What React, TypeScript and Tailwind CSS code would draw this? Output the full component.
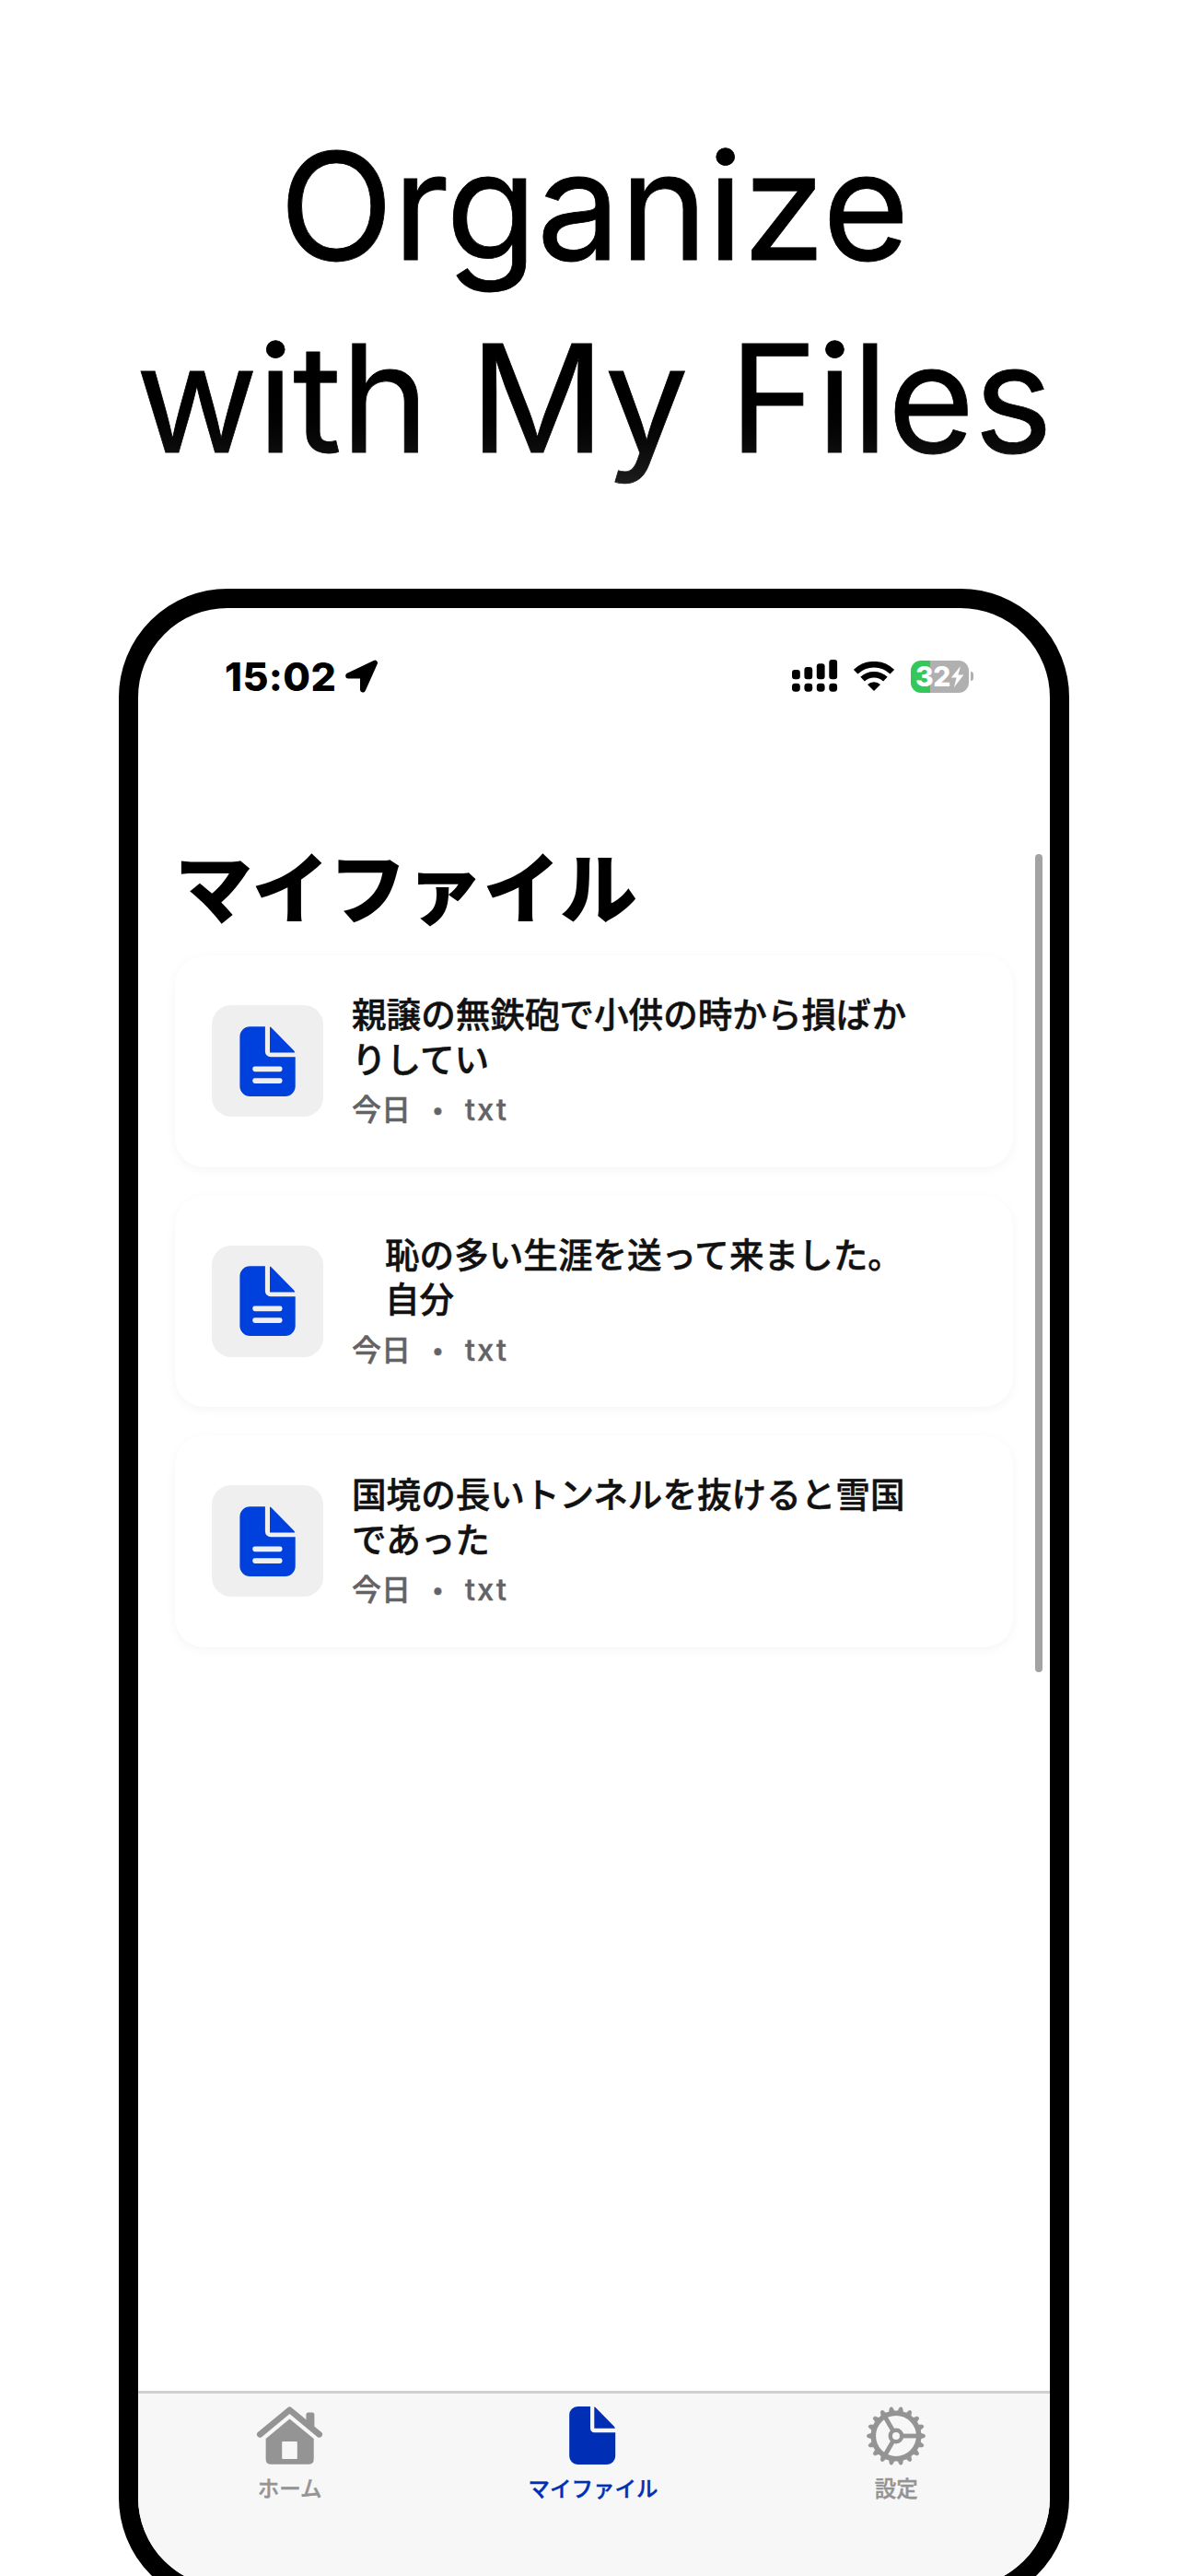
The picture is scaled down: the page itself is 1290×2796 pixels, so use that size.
import React from 'react';

type FileItem = { lines: string[]; indent: boolean };

const files: FileItem[] = [
  { lines: ['親譲の無鉄砲で小供の時から損ばか', 'りしてい'], indent: false },
  { lines: ['恥の多い生涯を送って来ました。', '自分'], indent: true },
  { lines: ['国境の長いトンネルを抜けると雪国', 'であった'], indent: false },
];

function LocationArrow() {
  return (
    <svg className="ml-[9px] h-[37px] w-[37px]" viewBox="0 0 37 37">
      <path
        d="M33 3.6 L20 32.4 V17.4 H4.2 Z"
        fill="#000"
        stroke="#000"
        strokeWidth="6"
        strokeLinejoin="round"
      />
    </svg>
  );
}

function Signal() {
  const bars = [
    { x: 0, y: 11 },
    { x: 13.4, y: 8 },
    { x: 26.8, y: 4.2 },
    { x: 40.3, y: 0 },
  ];
  return (
    <svg className="h-[36px] w-[50px]" viewBox="0 0 50 36">
      {bars.map((b) => (
        <g key={b.x}>
          <rect x={b.x} y={b.y} width="8.8" height={21.3 - b.y} rx="3" />
          <rect x={b.x} y="25.7" width="8.8" height="9" rx="3.4" />
        </g>
      ))}
    </svg>
  );
}

function Wifi() {
  return (
    <svg className="ml-[17px] h-[33px] w-[44px]" viewBox="0 0 44 33" fill="none" stroke="#000">
      <path d="M2.2 11.2 A28.5 28.5 0 0 1 41.8 11.2" strokeWidth="6.6" />
      <path d="M9.6 19.2 A18 18 0 0 1 34.4 19.2" strokeWidth="6.6" />
      <path d="M22 32 L15 25 A10 10 0 0 1 29 25 Z" fill="#000" stroke="none" />
    </svg>
  );
}

function Battery() {
  return (
    <div className="ml-[18px] flex items-center">
      <div className="flex h-[35px] w-[63px] items-center rounded-[11px] bg-[linear-gradient(90deg,#34c759_21px,#b0b0b0_21px)] pl-[5px]">
        <span className="font-['Inter'] text-[30px] leading-[35px] font-extrabold tracking-[-0.5px] text-white">32</span>
        <svg className="h-[25px] w-[15px]" viewBox="0 0 15 25" fill="#fff">
          <path d="M11 1 L0.8 13.6 H6.6 L4 24 L14.4 10.6 H8.4 Z" />
        </svg>
      </div>
      <div className="ml-[2px] h-[10px] w-[3px] rounded-r-full bg-[#b0b0b0]" />
    </div>
  );
}

function DocIcon() {
  return (
    <svg className="h-[76px] w-[61px]" viewBox="0 0 61 76">
      <path
        fill="#0040dd"
        d="M11.4 .3H27.9V27.3a6 6 0 0 0 6 6H60.7V65a11 11 0 0 1-11 11H11.4a11 11 0 0 1-11-11V11.3a11 11 0 0 1 11-11Z"
      />
      <path fill="#0040dd" d="M33 .6Q34.2 .9 35.2 1.9L58.8 26Q60 27.2 60.3 28.4H33Z" />
      <rect x="14.3" y="43.4" width="32.2" height="5.8" rx="2.4" fill="#efefef" />
      <rect x="14.3" y="56.2" width="32.2" height="5.8" rx="2.4" fill="#efefef" />
    </svg>
  );
}

function FileCard({ lines, indent }: FileItem) {
  return (
    <li className="flex h-[229.5px] items-center rounded-[32px] bg-white pl-[40px] shadow-[0_3px_12px_rgba(0,0,0,0.045)]">
      <div className="flex h-[121px] w-[121px] items-center justify-center rounded-[21px] bg-[#efefef]">
        <DocIcon />
      </div>
      <div className="ml-[31px] whitespace-nowrap">
        <div
          className={`text-[37.6px] leading-[48.5px] font-medium text-[#111] [-webkit-text-stroke:0.5px_#111] ${indent ? 'pl-[36px]' : ''}`}
        >
          {lines.map((l) => (
            <div key={l}>{l}</div>
          ))}
        </div>
        <div className="mt-[10px] flex text-[32px] leading-[40px] font-medium text-[#636366] [-webkit-text-stroke:0.5px_#636366]">
          <span>今日</span>
          <span className="flex w-[59px] items-center justify-center">
            <span className="text-[24px] leading-[40px]">•</span>
          </span>
          <span className="tracking-[2.3px]">txt</span>
        </div>
      </div>
    </li>
  );
}

function HomeIcon() {
  return (
    <svg className="h-[68px] w-[75px]" viewBox="0 0 226 204" fill="#949494">
      <path d="M16 97 L113 17 L210 97" fill="none" stroke="#949494" strokeWidth="20" strokeLinecap="round" strokeLinejoin="round" />
      <path d="M167 60 V32 Q167 25 174 25 H187 Q194 25 194 32 V84 Z" />
      <path d="M113 46 L192 111 V177 Q192 195 174 195 H53 Q35 195 35 177 V111 Z" />
      <rect x="88" y="120" width="50" height="57" rx="3" fill="#f7f7f7" />
    </svg>
  );
}

function FileIcon() {
  return (
    <svg className="h-[68px] w-[51px]" viewBox="0 -2 51 68" fill="#002fb5">
      <path d="M9.2 0H23V23.7a4.5 4.5 0 0 0 4.5 4.5H50.2V54a9 9 0 0 1-9 9H9.2a9 9 0 0 1-9-9V9a9 9 0 0 1 9-9Z" />
      <path d="M27.3 .3Q28.3 .6 29.1 1.4L48.7 21.4Q49.8 22.5 50 23.7H27.3Z" />
    </svg>
  );
}

function GearIcon() {
  const teeth = Array.from({ length: 18 }, (_, i) => i * 20);
  return (
    <svg className="h-[68px] w-[68px]" viewBox="-34 -34 68 68" fill="none" stroke="#949494">
      <circle r="24.7" strokeWidth="5.6" />
      {teeth.map((a) => (
        <path key={a} transform={`rotate(${a})`} d="M26 -3.2 L31 -1.5 Q32.4 0 31 1.5 L26 3.2Z" fill="#949494" strokeWidth="0.6" />
      ))}
      <circle r="6.2" strokeWidth="4.4" />
      {[0, 120, 240].map((a) => (
        <path key={a} transform={`rotate(${a})`} d="M7 0H24" strokeWidth="4.8" />
      ))}
    </svg>
  );
}

const tabs = [
  { label: 'ホーム', icon: <HomeIcon />, color: 'text-[#949494]' },
  { label: 'マイファイル', icon: <FileIcon />, color: 'text-[#002fb5]' },
  { label: '設定', icon: <GearIcon />, color: 'text-[#949494]' },
];

export default function App() {
  return (
    <div className="flex h-[2796px] w-[1290px] flex-col items-center overflow-hidden bg-white font-['Inter','Noto_Sans_CJK_JP',sans-serif]">
      <h1 className="mt-[119px] h-[520px] shrink-0 text-center text-[162px] leading-[209px] tracking-[-0.7px] whitespace-nowrap">
        <span className="block [-webkit-text-stroke:0.8px_#000]">Organize</span>
        <span className="block bg-linear-to-b from-black from-40% to-[#222] bg-clip-text text-transparent [-webkit-text-stroke:0.8px_transparent]">
          with My Files
        </span>
      </h1>

      <div className="relative flex h-[2190px] w-[1032px] shrink-0 flex-col overflow-hidden rounded-[118px] border-[21px] border-black bg-white">
        <div className="mt-[54px] flex h-[40px] items-center justify-between pr-[83px] pl-[94px]">
          <div className="flex items-center">
            <span className="text-[43px] leading-[40px] font-extrabold tracking-[0.4px]">15:02</span>
            <LocationArrow />
          </div>
          <div className="flex items-center">
            <Signal />
            <Wifi />
            <Battery />
          </div>
        </div>

        <main className="flex flex-1 flex-col px-[40px]">
          <h2 className="mt-[150px] h-[133px] text-[84px] leading-[124px] font-black tracking-[-0.4px] whitespace-nowrap">マイファイル</h2>
          <ul className="flex flex-col gap-[31px]">
            {files.map((f) => (
              <FileCard key={f.lines[0]} {...f} />
            ))}
          </ul>
        </main>

        <div className="absolute top-[267px] right-[8px] h-[888px] w-[8px] rounded-full bg-[#a3a3a3]" />

        <nav className="grid h-[213px] grid-cols-3 border-t-[3px] border-[#cfd1d1] bg-[#f7f7f7] pr-[2px]">
          {tabs.map((t) => (
            <div key={t.label} className={`flex flex-col items-center pt-[12px] ${t.color}`}>
              {t.icon}
              <span className="mt-[7px] text-[23.5px] leading-[34px] font-medium [-webkit-text-stroke:0.4px_currentColor]">
                {t.label}
              </span>
            </div>
          ))}
        </nav>
      </div>
    </div>
  );
}
